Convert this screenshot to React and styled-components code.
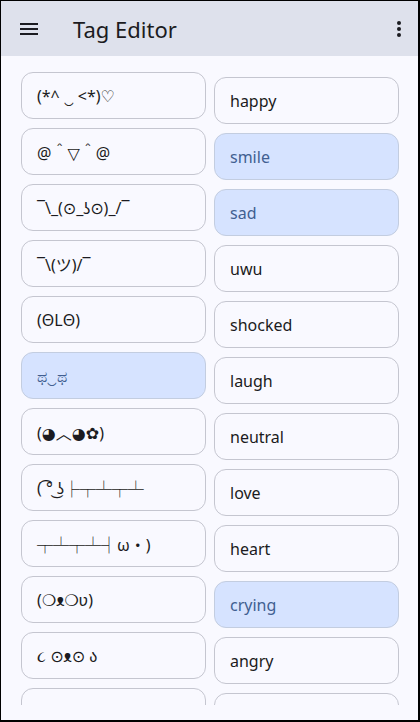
import React, { useLayoutEffect, useRef } from "react";
import styled, { createGlobalStyle } from "styled-components";

const GlobalStyle = createGlobalStyle`
  html, body {
    margin: 0;
    padding: 0;
    background: #000;
  }
  * {
    box-sizing: border-box;
  }
`;

const Frame = styled.div`
  width: 420px;
  height: 722px;
  border-style: solid;
  border-color: #000;
  border-width: 1px 2px 2px 1px;
  background: #f9f9ff;
  display: flex;
  flex-direction: column;
  font-family: "Noto Sans", "DejaVu Sans", "Noto Sans CJK JP", sans-serif;
  overflow: hidden;
`;

const TopBar = styled.header`
  height: 55px;
  flex: none;
  display: flex;
  align-items: center;
  padding: 0 7px 0 16px;
  background: #dee1ec;
  color: #1b1b21;
`;

const IconSlot = styled.div`
  width: 24px;
  height: 24px;
  display: flex;
  align-items: center;
  justify-content: center;
  color: #1b1b21;
`;

const Title = styled.h1`
  flex: 1;
  margin: 0 0 0 32px;
  font-size: 22px;
  font-weight: 400;
  line-height: 28px;
  color: #1b1b21;
`;

const Body = styled.main`
  flex: 1;
  min-height: 0;
  display: flex;
  gap: 8px;
  padding: 0 19px 15px 20px;
`;

const Column = styled.div`
  flex: 1;
  min-width: 0;
  display: flex;
  flex-direction: column;
  gap: 9px;
  padding: 21px 0 16px;
  overflow-y: auto;
  scrollbar-width: none;
  &::-webkit-scrollbar {
    display: none;
  }
`;

const Chip = styled.div`
  flex: none;
  height: 47px;
  display: flex;
  align-items: center;
  padding: 0 15px;
  border: 1px solid ${(p) => (p.$active ? "#c3cde0" : "#c5c6d0")};
  border-radius: 12px;
  background: ${(p) => (p.$active ? "#d6e3ff" : "#f9f9ff")};
  color: ${(p) => (p.$active ? "#415f91" : "#1b1b21")};
  font-size: 16px;
  white-space: pre;
  overflow: hidden;
`;

// box-drawing runs come from the CJK face, full width and thin
const BoxRun = styled.span`
  font-family: "Noto Sans CJK JP", sans-serif;
`;

const MenuIcon = () => (
  <svg width="24" height="24" viewBox="0 0 24 24" fill="currentColor">
    <path d="M3 18h18v-2H3v2zm0-5h18v-2H3v2zm0-7v2h18V6H3z" />
  </svg>
);

const MoreIcon = () => (
  <svg width="24" height="24" viewBox="0 0 24 24" fill="currentColor">
    <circle cx="12" cy="6" r="2" />
    <circle cx="12" cy="12" r="2" />
    <circle cx="12" cy="18" r="2" />
  </svg>
);

const Kaomoji = ({ text }) =>
  text
    .split(/([\u2500-\u257F]+)/)
    .map((part, i) =>
      /[\u2500-\u257F]/.test(part) ? <BoxRun key={i}>{part}</BoxRun> : part
    );

const emoticons = [
  { text: "(*^ ‿ <*)♡" },
  { text: "@＾▽＾@" },
  { text: "¯\\_(⊙_ʖ⊙)_/¯" },
  { text: "¯\\(ツ)/¯" },
  { text: "(ΘLΘ)" },
  { text: "ಥ‿ಥ", active: true },
  { text: "(◕︿◕✿)" },
  { text: "( ͡° ͜ʖ├┬┴┬┴" },
  { text: "┬┴┬┴┤ω・)" },
  { text: "(❍ᴥ❍ʋ)" },
  { text: "૮ ⊙ᴥ⊙ ა" },
  { text: "ʕ•ᴥ•ʔ" },
];

const tags = [
  { text: "happy" },
  { text: "smile", active: true },
  { text: "sad", active: true },
  { text: "uwu" },
  { text: "shocked" },
  { text: "laugh" },
  { text: "neutral" },
  { text: "love" },
  { text: "heart" },
  { text: "crying", active: true },
  { text: "angry" },
  { text: "cute" },
];

const App = () => {
  const leftRef = useRef(null);

  useLayoutEffect(() => {
    if (leftRef.current) leftRef.current.scrollTop = 5;
  }, []);

  return (
    <>
      <GlobalStyle />
      <Frame>
        <TopBar>
          <IconSlot>
            <MenuIcon />
          </IconSlot>
          <Title>Tag Editor</Title>
          <IconSlot>
            <MoreIcon />
          </IconSlot>
        </TopBar>
        <Body>
          <Column ref={leftRef}>
            {emoticons.map((e, i) => (
              <Chip key={i} $active={e.active}>
                <Kaomoji text={e.text} />
              </Chip>
            ))}
          </Column>
          <Column>
            {tags.map((t) => (
              <Chip key={t.text} $active={t.active}>
                {t.text}
              </Chip>
            ))}
          </Column>
        </Body>
      </Frame>
    </>
  );
};

export default App;
